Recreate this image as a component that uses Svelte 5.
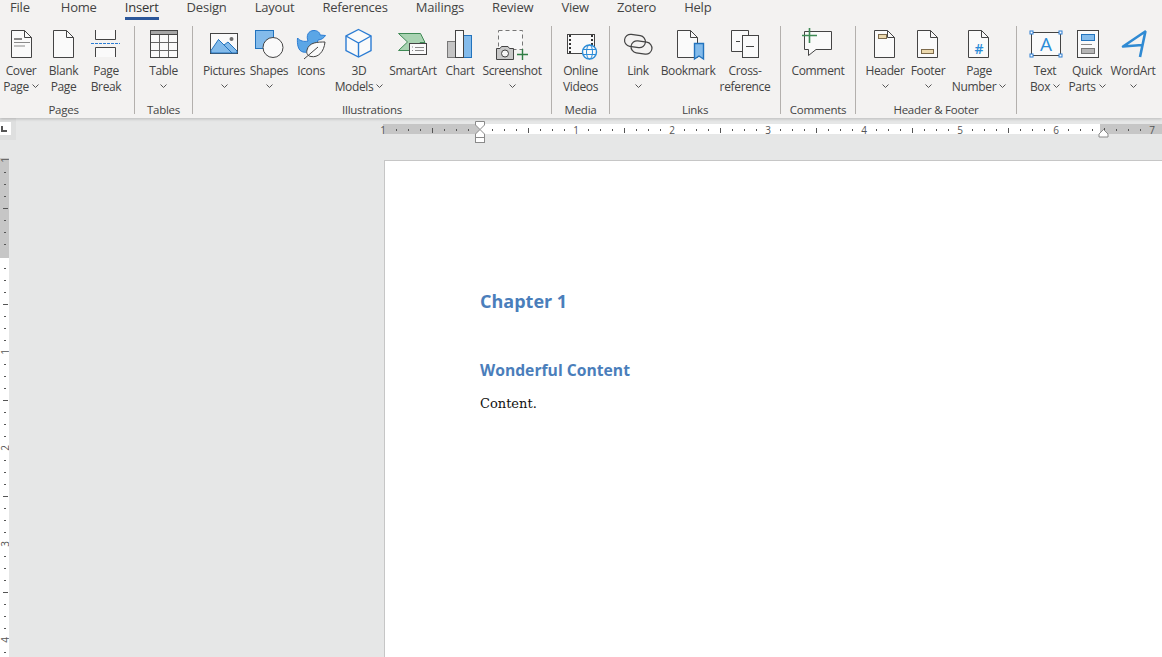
<script>
	const tabs = ['File', 'Home', 'Insert', 'Design', 'Layout', 'References', 'Mailings', 'Review', 'View', 'Zotero', 'Help'];

	const groups = [
		{ name: 'Pages', width: 134, pr: 7, items: [
			{ cx: 21, w: 42, lines: ['Cover', 'Page'], chev: true, icon: cover },
			{ cx: 64, w: 43, lines: ['Blank', 'Page'], icon: blank },
			{ cx: 106, w: 42, lines: ['Page', 'Break'], icon: pageBreak }
		] },
		{ name: 'Tables', width: 57, items: [
			{ cx: 164, w: 56, lines: ['Table'], chev: true, icon: table }
		] },
		{ name: 'Illustrations', width: 358, items: [
			{ cx: 224, w: 44, lines: ['Pictures'], chev: true, icon: pictures },
			{ cx: 269, w: 46, lines: ['Shapes'], chev: true, icon: shapes },
			{ cx: 311, w: 38, lines: ['Icons'], icon: icons },
			{ cx: 359, w: 58, lines: ['3D', 'Models'], chev: true, icon: models },
			{ cx: 413, w: 50, lines: ['SmartArt'], icon: smartArt },
			{ cx: 460, w: 44, lines: ['Chart'], icon: chart },
			{ cx: 512, w: 60, lines: ['Screenshot'], chev: true, icon: screenshot }
		] },
		{ name: 'Media', width: 57, items: [
			{ cx: 581, w: 56, lines: ['Online', 'Videos'], icon: videos }
		] },
		{ name: 'Links', width: 170, items: [
			{ cx: 639, w: 42, lines: ['Link'], chev: true, icon: link },
			{ cx: 689, w: 58, lines: ['Bookmark'], icon: bookmark },
			{ cx: 746, w: 56, lines: ['Cross-', 'reference'], icon: crossRef }
		] },
		{ name: 'Comments', width: 74, items: [
			{ cx: 818, w: 60, lines: ['Comment'], icon: comment }
		] },
		{ name: 'Header & Footer', width: 160, items: [
			{ cx: 885, w: 42, lines: ['Header'], chev: true, icon: header },
			{ cx: 928, w: 44, lines: ['Footer'], chev: true, icon: footer },
			{ cx: 979, w: 58, lines: ['Page', 'Number'], chev: true, icon: pageNumber }
		] },
		{ name: '', width: 145, pl: 7, pr: 4, justify: 'flex-start', items: [
			{ cx: 1045, w: 42, lines: ['Text', 'Box'], chev: true, icon: textBox },
			{ cx: 1087, w: 42, lines: ['Quick', 'Parts'], chev: true, icon: quickParts },
			{ cx: 1133, w: 50, lines: ['WordArt'], chev: true, icon: wordArt }
		] }
	];

	// ruler marks, one every 12px (an eighth of an inch)
	const hTicks = [];
	for (let x = 396; x < 1162; x += 12) {
		if ((x - 480) % 96 !== 0) hTicks.push({ x, long: (x - 480) % 48 === 0 });
	}
	const hNums = [[383, 1], [576, 1], [672, 2], [768, 3], [864, 4], [960, 5], [1056, 6], [1152, 7]];

	const vTicks = [];
	for (let y = 172; y < 657; y += 12) {
		if ((y - 256) % 96 !== 0) vTicks.push({ y, long: (y - 256) % 48 === 0 });
	}
	const vNums = [[160, 1], [352, 1], [448, 2], [544, 3], [640, 4]];
</script>

{#snippet doc(l, r, t, b)}
	<path class="ln doc" d="M{l} {t} H{r - 7} L{r} {t + 7} V{b} H{l} Z" />
	<path class="ln" d="M{r - 7} {t} V{t + 7} H{r}" />
{/snippet}

{#snippet cover()}
	{@render doc(11.5, 31.5, 30.5, 57.5)}
	<path class="grey" stroke-width="2" d="M14 39 H22" />
	<path class="grey" d="M14 42.5 H30 M14 46 H25" />
{/snippet}

{#snippet blank()}
	{@render doc(53.5, 73.5, 30.5, 57.5)}
{/snippet}

{#snippet pageBreak()}
	<path class="ln doc" d="M95.5 30 V39.5 H115.5 V30" />
	<path class="ln doc" d="M95.5 57 V47.5 H115.5 V57" />
	<path class="blue" stroke-dasharray="3 1" d="M91 43.5 H120" />
{/snippet}

{#snippet table()}
	<rect class="ln doc" x="150.5" y="30.5" width="27" height="27" />
	<rect x="150.5" y="30.5" width="27" height="4" fill="#a6a6a6" stroke="#444" />
	<path class="rule" d="M151 42.5 H177 M151 50.5 H177 M159.5 35 V57 M168.5 35 V57" />
{/snippet}

{#snippet pictures()}
	<rect class="ln doc" x="210.5" y="33.5" width="27" height="20" />
	<path fill="#83bbeb" stroke="#2273bd" d="M211 50.5 L218.5 39.5 L224 45 L228 42 L237 51 V53 H211 Z" />
	<path stroke="#2273bd" fill="none" d="M218.5 39.5 L232 53" />
	<circle cx="231.5" cy="39" r="2" fill="#6e6e6e" />
{/snippet}

{#snippet shapes()}
	<rect x="255.5" y="30.5" width="18" height="18" fill="#83bbeb" stroke="#2273bd" />
	<circle class="ln doc" cx="273" cy="47.5" r="10" />
{/snippet}

{#snippet icons()}
	<path fill="#5ba6e6" stroke="#2b7cd3" d="M297.5 38 C300 41 304 42 308 41 C306 36 308 30.5 314 30.5 C318 30.5 320 33 320 35 L325.5 35.5 C324 38 321 40 318 40 L316 47 C312 51 308 53 303 52 C298 51 297 44 297.5 38 Z" />
	<path class="ln doc" d="M325 42 C318 42 309 42 307 50 C306 54 308 56 311 56.5 C318 58 324 52 325 42 Z" />
	<path class="ln" d="M304 59 L318 47" />
{/snippet}

{#snippet models()}
	<path class="doc" stroke="#2b7cd3" stroke-width="1.4" d="M358.5 29.5 L371 36 V50.5 L358.5 57 L346 50.5 V36 Z" />
	<path stroke="#2b7cd3" stroke-width="1.4" fill="none" d="M346 36 L358.5 43 L371 36 M358.5 43 V57" />
{/snippet}

{#snippet smartArt()}
	<path fill="#a9d3b2" stroke="#3f8a55" d="M398.5 33.5 H420.5 L425 42.5 H420 L412 50.5 H398.5 L407.5 42 Z" />
	<rect class="ln doc" x="409.5" y="43.5" width="17" height="11" />
	<path class="grey" stroke-dasharray="1 1" d="M412 47 H413 M412 50.5 H413" />
	<path class="grey" d="M415 47.5 H424 M415 50.5 H424" />
{/snippet}

{#snippet chart()}
	<rect x="447.5" y="41.5" width="9" height="16" fill="#c4c4c4" stroke="#777" />
	<rect x="463.5" y="35.5" width="8" height="22" fill="#83bbeb" stroke="#2273bd" />
	<rect class="ln doc" x="455.5" y="30.5" width="8" height="27" />
{/snippet}

{#snippet screenshot()}
	<rect x="498.5" y="30.5" width="24" height="19" fill="#f8f8f8" stroke="#777" stroke-dasharray="4 3" />
	<path fill="#c8c8c8" stroke="#444" d="M496.5 48.5 H500 L501.5 46.5 H508 L509.5 48.5 H513.5 V59.5 H496.5 Z" />
	<circle cx="505" cy="53.5" r="3.5" fill="#f5f5f5" stroke="#444" />
	<path stroke="#2f7d44" stroke-width="1.4" fill="none" d="M517 54.5 H528 M522.5 49 V60" />
{/snippet}

{#snippet videos()}
	<rect class="ln doc" x="567.5" y="34.5" width="27" height="19" />
	<path stroke="#333" stroke-width="2" stroke-dasharray="2 2" fill="none" d="M570 35 V53 M592 35 V46" />
	<circle cx="589.5" cy="52" r="7" fill="#fafafa" stroke="#2b8cd8" stroke-width="1.4" />
	<ellipse cx="589.5" cy="52" rx="3" ry="7" fill="none" stroke="#2b8cd8" />
	<path stroke="#2b8cd8" fill="none" d="M583 49.5 H596 M583 54.5 H596" />
{/snippet}

{#snippet link()}
	<rect class="ln" stroke-width="1.2" x="625.5" y="35" width="21" height="12" rx="6" transform="rotate(8 636 41)" />
	<rect class="ln" stroke-width="1.2" x="632" y="41.5" width="21" height="12" rx="6" transform="rotate(8 642.5 47.5)" />
{/snippet}

{#snippet bookmark()}
	{@render doc(678.5, 698.5, 30.5, 57.5)}
	<path fill="#83bbeb" stroke="#2273bd" stroke-width="1.4" d="M695.5 43.5 H704.5 V59 L700 56 L695.5 59 Z" />
{/snippet}

{#snippet crossRef()}
	<path class="ln doc" d="M732.5 30.5 H749.5 V51.5 H732.5 Z" />
	<rect class="ln doc" x="743.5" y="35.5" width="16" height="22" />
	<path class="ln" d="M737 41.5 H741 M747 46.5 H755" />
{/snippet}

{#snippet comment()}
	<path class="ln doc" d="M804.5 31.5 H831.5 V49.5 H816 L808.5 55.5 V49.5 H804.5 Z" />
	<path stroke="#3f8a55" stroke-width="1.6" fill="none" d="M802 35.5 H817 M809.5 28 V43" />
{/snippet}

{#snippet header()}
	{@render doc(874.5, 894.5, 30.5, 57.5)}
	<rect class="tan" x="878.5" y="34.5" width="8" height="4" />
{/snippet}

{#snippet footer()}
	{@render doc(917.5, 937.5, 30.5, 57.5)}
	<rect class="tan" x="921.5" y="49.5" width="12" height="4" />
{/snippet}

{#snippet pageNumber()}
	{@render doc(968.5, 988.5, 30.5, 57.5)}
	<text class="mark" x="979" y="54" font-size="14" font-weight="600" text-anchor="middle">#</text>
{/snippet}

{#snippet textBox()}
	<rect class="ln doc" x="1031.5" y="32.5" width="29" height="23" />
	<text class="mark" x="1046" y="50.5" font-size="19" text-anchor="middle">A</text>
	<g fill="#fff" stroke="#2b7cd3">
		<rect x="1030" y="31" width="3" height="3" />
		<rect x="1059" y="31" width="3" height="3" />
		<rect x="1030" y="54" width="3" height="3" />
		<rect x="1059" y="54" width="3" height="3" />
	</g>
{/snippet}

{#snippet quickParts()}
	<rect class="ln doc" x="1077.5" y="30.5" width="21" height="27" />
	<rect x="1081.5" y="34.5" width="13" height="6" fill="#83bbeb" stroke="#2273bd" />
	<path class="grey" d="M1081 44.5 H1092" />
	<rect x="1081.5" y="48.5" width="13" height="5" fill="#b5b5b5" stroke="#777" />
{/snippet}

{#snippet wordArt()}
	<path fill="none" stroke="#2f8ad3" stroke-width="2.6" stroke-linejoin="round" d="M1146 31 L1123 46.5 L1142 45 M1145.5 31 L1140 57" />
{/snippet}

<div class="word">
	<header class="ribbon">
		<nav class="tabs">
			{#each tabs as tab}
				<span class="tab" class:active={tab === 'Insert'}>{tab}</span>
			{/each}
		</nav>
		<div class="groups">
			{#each groups as g, i}
				<section class="group" style="width: {g.width}px; padding: 0 {g.pr || 0}px 0 {g.pl || 0}px">
					<div class="buttons" style="justify-content: {g.justify || 'center'}">
						{#each g.items as b}
							<div class="btn" style="width: {b.w}px">
								<svg class="icon" width="50" height="36" viewBox="{b.cx - 25} 26 50 36">
									{@render b.icon()}
								</svg>
								{#each b.lines as line, n}
									<div class="line">
										{line}
										{#if b.chev && b.lines.length > 1 && n === b.lines.length - 1}
											<svg class="chev" width="7" height="4" viewBox="0 0 7 4"><path d="M.5 .5 L3.5 3.5 L6.5 .5" /></svg>
										{/if}
									</div>
								{/each}
								{#if b.chev && b.lines.length === 1}
									<div class="line">
										<svg class="chev" width="7" height="4" viewBox="0 0 7 4"><path d="M.5 .5 L3.5 3.5 L6.5 .5" /></svg>
									</div>
								{/if}
							</div>
						{/each}
					</div>
					<div class="group-name">{g.name}</div>
				</section>
				{#if i < groups.length - 1}
					<div class="sep"></div>
				{/if}
			{/each}
		</div>
	</header>

	<div class="ruler-row">
		<div class="corner"><span class="tab-stop"></span></div>
		<svg class="h-ruler" width="787" height="40" viewBox="375 118 787 40">
			<rect x="383" y="124" width="97" height="10" fill="#c6c6c6" />
			<rect x="480" y="124" width="620" height="10" fill="#fff" />
			<rect x="1100" y="124" width="62" height="10" fill="#c6c6c6" />
			{#each hTicks as t}
				<rect x={t.x} y={t.long ? 128 : 129} width="1" height={t.long ? 5 : 2} fill="#555" />
			{/each}
			{#each hNums as [x, n]}
				<text class="ruler-num" {x} y="133.5" text-anchor="middle">{n}</text>
			{/each}
			<path class="handle" d="M475.5 121.5 H484.5 V125 L480 129.5 L475.5 125 Z" />
			<path class="handle" d="M480 129.5 L484.5 134 V137.5 H475.5 V134 Z" />
			<rect class="handle" x="475.5" y="137.5" width="9" height="5" />
			<path class="handle" d="M1103.5 129.5 L1108 134 V137 H1099 V134 Z" />
		</svg>
	</div>

	<div class="workspace">
		<svg class="v-ruler" width="9" height="499" viewBox="0 158 9 499">
			<rect x="0" y="158" width="9" height="100" fill="#c6c6c6" />
			<rect x="0" y="258" width="9" height="399" fill="#fff" />
			{#each vTicks as t}
				<rect x={t.long ? 3 : 4} y={t.y} width={t.long ? 5 : 2} height="1" fill="#555" />
			{/each}
			{#each vNums as [y, n]}
				<text class="ruler-num" x="8.5" {y} text-anchor="middle" transform="rotate(-90 8.5 {y})">{n}</text>
			{/each}
		</svg>
		<main class="page">
			<h1>Chapter 1</h1>
			<h2>Wonderful Content</h2>
			<p>Content.</p>
		</main>
	</div>
</div>

<style>
	:global(body) {
		margin: 0;
		overflow: hidden;
	}

	.word {
		background: #e6e7e7;
		color: #444;
		display: flex;
		flex-direction: column;
		font-family: "Open Sans", "Liberation Sans", sans-serif;
		font-size: 12px;
		height: 657px;
		overflow: hidden;
	}

	.ribbon {
		background: #f3f2f1;
		box-shadow: 0 1px 3px rgba(0, 0, 0, 0.2);
		flex: none;
		height: 118px;
		position: relative;
	}

	.tabs {
		display: flex;
		gap: 28px;
		height: 26px;
		padding-left: 10px;
	}

	.tab {
		box-sizing: border-box;
		font-size: 13px;
		height: 20px;
		letter-spacing: -0.2px;
		line-height: 15px;
	}

	.tab:first-child {
		margin-right: 3px;
	}

	.tab.active {
		border-bottom: 3px solid #2b579a;
		color: #333;
	}

	.groups {
		display: flex;
		height: 92px;
	}

	.group {
		box-sizing: border-box;
		display: flex;
		flex: none;
		flex-direction: column;
	}

	.buttons {
		display: flex;
		flex: 1;
	}

	.btn {
		align-items: center;
		display: flex;
		flex: none;
		flex-direction: column;
	}

	.icon {
		flex: none;
	}

	.line {
		align-items: center;
		display: flex;
		flex: none;
		gap: 3px;
		height: 16px;
		letter-spacing: -0.35px;
		white-space: nowrap;
	}

	.group-name {
		font-size: 11.5px;
		height: 16px;
		letter-spacing: -0.25px;
		line-height: 16px;
		text-align: center;
	}

	.sep {
		background: #b3b0ad;
		flex: none;
		height: 88px;
		width: 1px;
	}

	.chev path {
		fill: none;
		stroke: #555;
	}

	.ln {
		fill: none;
		stroke: #444;
	}

	.doc {
		fill: #fafafa;
	}

	.grey {
		fill: none;
		stroke: #8a8a8a;
	}

	.rule {
		fill: none;
		stroke: #666;
	}

	.blue {
		fill: none;
		stroke: #2b7cd3;
	}

	.tan {
		fill: #ecd9ae;
		stroke: #7d6b4c;
	}

	.mark {
		fill: #2b8cd8;
		font-family: "Open Sans", sans-serif;
	}

	.ruler-row {
		display: flex;
		flex: none;
		height: 40px;
	}

	.corner {
		align-self: flex-start;
		background: #dedfdf;
		box-sizing: border-box;
		height: 22px;
		margin-right: 359px;
		padding-top: 4px;
		width: 16px;
	}

	.tab-stop {
		background: #fff;
		box-sizing: border-box;
		display: block;
		height: 13px;
		position: relative;
		width: 11px;
	}

	.tab-stop::after {
		border-bottom: 2px solid #555;
		border-left: 2px solid #555;
		content: "";
		height: 4px;
		left: 1px;
		position: absolute;
		top: 4px;
		width: 4px;
	}

	.h-ruler,
	.v-ruler {
		display: block;
		flex: none;
	}

	.ruler-num {
		fill: #555;
		font-family: "Open Sans", sans-serif;
		font-size: 10px;
	}

	.handle {
		fill: #fff;
		stroke: #8a8a8a;
	}

	.workspace {
		display: flex;
		flex: 1;
		min-height: 0;
	}

	.page {
		background: #fff;
		border-left: 1px solid #c6c6c6;
		border-top: 1px solid #c6c6c6;
		box-sizing: border-box;
		flex: 1;
		margin-left: 375px;
		margin-top: 2px;
		padding: 128px 0 0 95px;
	}

	h1,
	h2 {
		color: #4a7ebb;
		font-family: "Open Sans", sans-serif;
		font-weight: 700;
		margin: 0;
	}

	h1 {
		font-size: 18px;
		line-height: 24px;
	}

	h2 {
		font-size: 15.7px;
		line-height: 22px;
		margin-top: 46px;
	}

	p {
		color: #111;
		font-family: "DejaVu Serif", serif;
		font-size: 13px;
		line-height: 18px;
		margin: 14px 0 0;
	}
</style>
